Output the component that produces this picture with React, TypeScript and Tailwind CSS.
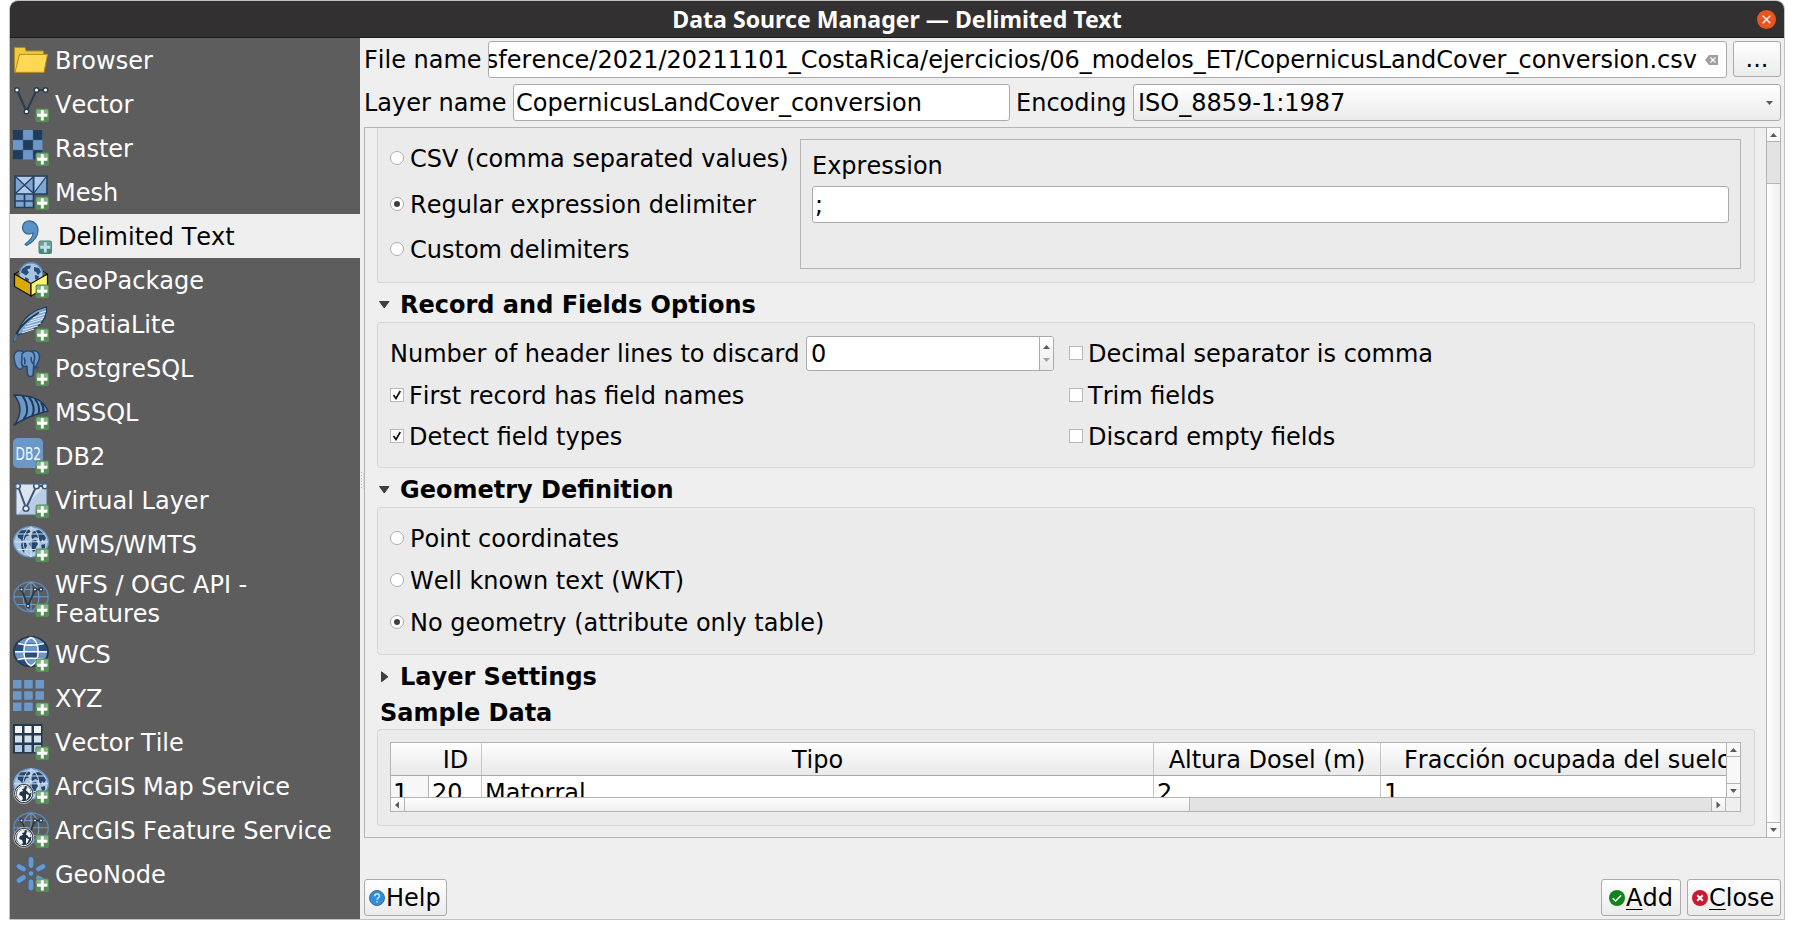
import React from "react";

const Plus = ({ tint = false }: { tint?: boolean }) => (
  <g>
    <rect x="22.5" y="22.5" width="13.5" height="13.5" rx="2" fill={tint ? "#4a8a78" : "#578c57"} />
    <rect x="23.5" y="23.5" width="11.5" height="5.5" rx="1" fill={tint ? "#6ba293" : "#86b086"} />
    <path d="M29.3 24.2v10.2M24.2 29.3h10.2" stroke={tint ? "#c3dcee" : "#ffffff"} strokeWidth="2.9" />
  </g>
);

const Globe = () => (
  <g>
    <ellipse cx="18" cy="15.8" rx="17.3" ry="15" fill="#a9c5e4" stroke="#6b97ca" strokeWidth="1.4" />
    <path d="M4.5 8.5 8 4.5l8-1 2 2-3 2 1 2-3 1-2 4-2 1-1-2-3-2zM9 16l4 1 1 3-2 3-1 4-2-3-1-5zM18 8l3-3 5-1 4 3 3 5-2 3-2-2-1 4-3-5-3-1-2 2-2-1zM18 15l5-1 2 4-2 3-1 4-2 1-2-5-2-3zM28 19l4-1v4l-3 1z" fill="#26466d" />
    <path d="M1 15.8h34M4.5 8h27M4.5 23.5h27M18 .8v30M18 .8C7.500 7 7.500 25 18 30.800M18 .8c10.500 6.200 10.500 24 0 30" fill="none" stroke="#dbe8f5" strokeWidth="0.9" />
  </g>
);

const Wire = () => (
  <g>
    <ellipse cx="18" cy="15.8" rx="17.2" ry="14.900" fill="none" stroke="#5b86bb" strokeWidth="1.5" />
    <path d="M1 15.800h34M4.500 8.500h27M4.500 23.500h27M18 1v30M18 1C7.500 7 7.500 25 18 30.800M18 1c10.500 6.200 10.500 24 0 29.800" fill="none" stroke="#6f9bcd" strokeWidth="1.100" />
    <path d="M8.500 8.500 15 25 22 8.500h6" fill="none" stroke="#26384c" strokeWidth="1.800" />
    {[[8.5, 8.5], [15, 25], [22, 8.5], [28, 8.5]].map(([x, y]) => (
      <circle key={`${x}-${y}`} cx={x} cy={y} r="1.600" fill="#e8f0f8" stroke="#26384c" strokeWidth="1.200" />
    ))}
  </g>
);

const Arc = () => (
  <g>
    <circle cx="10.700" cy="25.500" r="10" fill="#20303f" stroke="#d5d9dd" strokeWidth="0.800" />
    <circle cx="10.700" cy="25.500" r="8.200" fill="#243447" stroke="#ffffff" strokeWidth="1" />
    <path d="M5 20.500l4-2.500 3 .5-1 2-2 .5 1 2-3 1-1 3 3 1 1 3-2 2-3-3-1.500-4zM14 19l3 2 1 4-2 .5-1.500-2-1.500-1zM13 26l3 1-1 3-2 2z" fill="#f5f7f9" />
  </g>
);

const icons: Record<string, React.ReactNode> = {
  Browser: (
    <g stroke="#b58a1c" strokeWidth="1">
      <path d="M1.500 30V5.500h10.500l1 3.500h17.500V30z" fill="#f0cb42" />
      <path d="M2 30.300 6.500 12.300h28L31 30.300z" fill="#ffd956" />
    </g>
  ),
  Vector: (
    <g>
      <path d="M4 4 13.500 25.500 23.500 4h9" fill="none" stroke="#2b3d50" strokeWidth="2.100" />
      {[[4, 4], [13.5, 25.5], [23.5, 4], [32.5, 4]].map(([x, y]) => (
        <circle key={`${x}-${y}`} cx={x} cy={y} r="2.300" fill="#ffffff" stroke="#2b3d50" strokeWidth="1.400" />
      ))}
    </g>
  ),
  Raster: (
    <g>
      <path d="M0 0h29.500v29.500H0z" fill="#6c98c9" />
      <path d="M0 0h10v10H0zM20 0h9.500v10H20zM10 10h10v10H10zM0 20h10v9.500H0zM20 20h9.500v9.500H20z" fill="#213c5b" />
      <path d="M10 0v30M20 0v30M0 10h30M0 20h30" stroke="#4c6b8d" strokeWidth=".5" />
    </g>
  ),
  Mesh: (
    <g>
      <path d="M2 2h32v18H20.500v13.500H2z" fill="#7ea6d4" />
      <path d="M3 3l8 8L20 3zM3 19l8-7 9 7zM22 3h10L22 16z" fill="#b3cbe7" />
      <path d="M2 2h32v18H2zM2 20v13.500h18.500V2M2 27h18.500M11.500 20v13.500" fill="none" stroke="#24405f" strokeWidth="1.700" />
      <path d="M3 3l17 16M20 3 3 19M33 3 21 19" stroke="#24405f" strokeWidth="1.200" />
    </g>
  ),
  "Delimited Text": (
    <path d="M6.500 9.500C6.500 5 9.800 2.600 14 3c5 .5 8.300 4.500 8 10-.4 6.500-5.500 11.500-11.500 14.500l-1.300-1.300c4.300-3.200 7.600-6.700 8-11.200-3.500 1.500-7 1-9-1-1.200-1.200-1.700-3-1.700-4.500z" fill="#5a92c8" stroke="#366b9c" strokeWidth="1.300" />
  ),
  GeoPackage: (
    <g>
      <path d="M1.500 12 8 8v9zM34.500 12 28 8v9z" fill="#6b5a10" stroke="#111" strokeWidth="1" />
      <circle cx="18" cy="12.500" r="11.700" fill="#a9c5e4" stroke="#5d8cc0" strokeWidth="1.400" />
      <path d="M9 7l4-3 5-.5-1 3-3 1 2 3-3 3-3-2-2-1zM21 5l5 1 2 4-3 3-2-3-2-1zM12 15l4 2-1 4h-3zM22 13l4 1-1 4-3-1z" fill="#2b4f7b" />
      <path d="M1.500 12 18 21.500v12.500L1.500 24.500z" fill="#d9aa00" stroke="#111" strokeWidth="1.200" />
      <path d="M34.500 12 18 21.500v12.500l16.500-9.500z" fill="#fdf372" stroke="#111" strokeWidth="1.200" />
    </g>
  ),
  SpatiaLite: (
    <g>
      <path d="M4.500 29C6 19 13 6 33.500 1 34 7 32 14 26 19c-5 4-10 7-21.500 10z" fill="#7ba5d3" stroke="#24384d" strokeWidth="1.200" />
      <path d="M9 27l12-4M10 24l15-4M12 21l16-4M14 18l16-5M17 15l14-4M20 12l12-4M24 8l9-3" stroke="#dce8f4" strokeWidth="1.100" />
      <path d="M1 35.500c1-8 8-19 25-29" fill="none" stroke="#24384d" strokeWidth="1.800" />
      <path d="M1.500 35c.3-2.500 1-4.500 2-6.500" stroke="#4d79a8" strokeWidth="2.200" />
    </g>
  ),
  PostgreSQL: (
    <g fill="#6c98c9" stroke="#294a70" strokeWidth="1.500" strokeLinejoin="round">
      <path d="M10 1.500c-6-2-9.500 1-9 6.500.5 4 2 9.500 5 11 3 1 4-2 4.500-5z" />
      <path d="M18 1.500c4-1.500 8-.5 8.500 4.500 0 5-3 9.500-4.500 11.500l-4-4z" />
      <path d="M9 4c2-3 6-3.800 9.500-2.500 3.500 1.500 3.500 6 2.500 10l-1 13.500c-.8 2.300-5 2-5.500-.5l-.5-8.500c-3 1-5 0-5.500-2.500z" />
      <path d="M21 17.500c2 1 3.800.5 5-.5M11 7.500c1 2.500 1.500 5 .5 7M18.500 7c-.8 2 .2 5 1.500 7" fill="none" />
    </g>
  ),
  MSSQL: (
    <g stroke="#1f3957" strokeWidth="1.400">
      <path d="M1 1c13 .5 28 2 34 16C23 20 9 25 .8 31.500 9 22 9 10 1 1z" fill="#6c98c9" />
      <path d="M9.500 2c6 8 6 18 1 23M16 3c5 6 6 14 3 19M22 5c4 5 5 10 3.500 15M28 8.500c2 3 3 6 2.500 9.500" fill="none" strokeWidth="2" />
    </g>
  ),
  DB2: (
    <g>
      <rect x="0" y="0" width="30" height="30" rx="5" fill="#6c98c9" />
      <text x="15.300" y="21.500" textAnchor="middle" textLength="25.500" lengthAdjust="spacingAndGlyphs" fontSize="18" fill="#f2f6fa" fontFamily="DejaVu Sans, sans-serif">DB2</text>
    </g>
  ),
  "Virtual Layer": (
    <g>
      <path d="M3 2h31v31H3z" fill="#b9cce2" />
      <path d="M3 2h31L3 33z" fill="#dbe4ef" />
      <path d="M5 4 13 26 23.500 4h9" fill="none" stroke="#3c5878" strokeWidth="2" />
      {[[4.5, 4], [13, 26.5], [23.5, 4], [32, 4]].map(([x, y]) => (
        <circle key={`${x}-${y}`} cx={x} cy={y} r="2.800" fill="#eef3f8" stroke="#3c5878" strokeWidth="1.600" />
      ))}
      <path d="M3 2h31v31H3z" fill="none" stroke="#4e6f94" strokeWidth="1" />
    </g>
  ),
  "WMS/WMTS": <Globe />,
  "WFS / OGC API - Features": <Wire />,
  WCS: (
    <g>
      <ellipse cx="18" cy="15.700" rx="17.200" ry="14.900" fill="#2a4e78" stroke="#22364c" strokeWidth="1.500" />
      <path d="M2 15.700C2 19 3 21 4 22.500h28c1-1.500 2-4 2-6.800zM5 7.500C8 4 12 1.800 18 1.500s10 2.500 13 6z" fill="#6c98c9" />
      <path d="M12 8h12l1.500 7.500H10.500z" fill="#6c98c9" />
      <path d="M10.500 16h15L24 22.500H12z" fill="#2a4e78" />
      <path d="M12 22.500h12L18 30z" fill="#6c98c9" />
      <path d="M2 15.700h32M5 7.500c8 2 18 2 26 0M4.500 23.500c8-1.500 19-1.500 27 0M18 1.500C8.500 5 8.500 26 18 30M18 1.500C27.500 5 27.500 26 18 30" fill="none" stroke="#ffffff" strokeWidth="1.500" />
    </g>
  ),
  XYZ: (
    <path d="M0 0h8.500v8.500H0zM11.200 0h8.500v8.500h-8.500zM22.500 0H31v8.500h-8.500zM0 11.200h8.500v8.500H0zM11.200 11.200h8.500v8.500h-8.500zM22.500 11.200H31v8.500h-8.500zM0 22.500h8.500V31H0zM11.200 22.500h8.500V31h-8.500z" fill="#6c98c9" />
  ),
  "Vector Tile": (
    <g>
      <path d="M0 0h29.500v29.500H0z" fill="#26384c" />
      <path d="M2 2h7v7H2zM11.500 2h7v7h-7zM21 2h7v7h-7z" fill="#f2f4f6" />
      <path d="M2 11.500h7v7H2zM11.500 11.500h7v7h-7zM21 11.500h7v7h-7z" fill="#d3e0ee" />
      <path d="M2 21h7v7H2zM11.500 21h7v7h-7zM21 21h7v7h-7z" fill="#b0cbe9" />
    </g>
  ),
  "ArcGIS Map Service": (
    <g>
      <Globe />
      <Arc />
    </g>
  ),
  "ArcGIS Feature Service": (
    <g>
      <Wire />
      <Arc />
    </g>
  ),
  GeoNode: (
    <g>
      <path d="M18 3.500v6M18 26v6M6 10.500l4.500 2.500M30 10.500 25.500 13M6 24.500l4.500-3M30 24.500 25.500 22" stroke="#3c6390" strokeWidth="6.400" strokeLinecap="round" />
      <path d="M18 3.500v6M18 26v6M6 10.500l4.500 2.500M30 10.500 25.500 13M6 24.500l4.500-3M30 24.500 25.500 22" stroke="#6c98c9" strokeWidth="4.800" strokeLinecap="round" />
      <circle cx="18" cy="17.500" r="2.800" fill="#6c98c9" stroke="#3c6390" strokeWidth="1" />
    </g>
  ),
};

const sources = Object.keys(icons);

function SourceItem({ name }: { name: string }) {
  const selected = name === "Delimited Text";
  const tall = name.startsWith("WFS");
  return (
    <li
      className={`flex items-center gap-[6px] ${tall ? "h-[66px]" : "h-11"} ${
        selected ? "bg-[#efefef] pl-[6px] text-black" : "pl-[3px] text-white"
      }`}
    >
      <svg width="36" height="36" viewBox="0 0 36 36" className="shrink-0">
        {icons[name]}
        {name !== "Browser" && <Plus tint={selected} />}
      </svg>
      <span className={`w-[290px] pt-[2px] ${tall ? "leading-[29px]" : "leading-7"}`}>{name}</span>
    </li>
  );
}

type Dir = "up" | "down" | "left" | "right";
const arrows: Record<Dir, string> = {
  up: "M0 5h7L3.500 1z",
  down: "M0 1h7L3.500 5z",
  left: "M5 -.5v7L1 3z",
  right: "M1.500 -.5v7l4-3.500z",
};
const Arrow = ({ dir, color = "#5a5a5a" }: { dir: Dir; color?: string }) => (
  <svg width="8" height="6" viewBox="0 0 8 6" overflow="visible">
    <path d={arrows[dir]} fill={color} />
  </svg>
);

const Radio = ({ label, on = false }: { label: string; on?: boolean }) => (
  <label className="flex items-center gap-[6px]">
    <span className="flex size-[14px] items-center justify-center rounded-full border border-[#adadad] bg-white">
      {on && <span className="size-[6px] rounded-full bg-[#404040]" />}
    </span>
    <span className="h-7 leading-[30px]">{label}</span>
  </label>
);

const Check = ({ label, on = false }: { label: string; on?: boolean }) => (
  <label className="flex items-center gap-[5px]">
    <span className="flex size-[14px] items-center justify-center border border-[#b9b9b9] bg-white">
      {on && (
        <svg width="10" height="10" viewBox="0 0 10 10">
          <path d="M1.500 5 4 8.500 8.300 1" fill="none" stroke="#111" strokeWidth="1.700" />
        </svg>
      )}
    </span>
    <span className="h-7 leading-[30px]">{label}</span>
  </label>
);

const Heading = ({ title, open }: { title: string; open: boolean }) => (
  <h2 className="flex h-[39px] shrink-0 items-center pt-1 font-bold">
    <svg width="23" height="12" viewBox="0 0 23 12" className="shrink-0">
      <path d={open ? "M2.500 2.500h9.500l-4.750 6.500z" : "M4.500 .8v10L11 5.800z"} fill="#404040" stroke="#2a2a2a" strokeWidth="0.800" />
    </svg>
    {title}
  </h2>
);

const field = "flex items-center rounded-[3px] border border-[#ababab] bg-white";
const button = "flex items-center rounded-[3px] border border-[#ababab] bg-linear-to-b from-white to-[#ebebeb]";
const group = "rounded-[3px] border border-[#d7d7d7] bg-[#ebebeb]";
const headerCell = "flex h-full items-center justify-center border-r border-[#c6c6c6] pt-[2px]";

export default function App() {
  return (
    <div className="h-[929px] w-[1794px] overflow-hidden bg-white pl-[9px] font-['DejaVu_Sans',sans-serif] text-[24px] leading-7 text-black [font-kerning:none]">
      <div className="flex h-[920px] w-[1776px] flex-col overflow-hidden rounded-t-[9px] border border-[#c2c2c2] bg-[#efefef]">
        <header className="flex h-[37px] shrink-0 items-center border-b border-[#1d1c1d] bg-[#323031]">
          <div className="w-[36px]" />
          <h1 className="flex-1 pb-px text-center font-['Noto_Sans',sans-serif] text-[23.100px] font-bold text-white [font-kerning:normal]">
            Data Source Manager — Delimited Text
          </h1>
          <div className="flex w-[36px] pl-[9px]">
            <span className="flex size-[19px] items-center justify-center rounded-full bg-[#e95420]">
              <svg width="9" height="9" viewBox="0 0 9 9">
                <path d="M.7.7l7.600 7.600M8.300.7.700 8.300" stroke="#fff" strokeWidth="1.300" />
              </svg>
            </span>
          </div>
        </header>

        <div className="flex min-h-0 flex-1 whitespace-nowrap">
          <ul className="w-[350px] shrink-0 bg-[#5d5d5d] [&_span]:whitespace-normal">
            {sources.map((s) => (
              <SourceItem key={s} name={s} />
            ))}
          </ul>

          <div className="flex w-1 shrink-0 items-center justify-center pt-[3px]">
            <svg width="3" height="18" viewBox="0 0 3 18">
              <path d="M.5 1v16M2.500 2.500v16" stroke="#b4b4b4" strokeWidth="1" strokeDasharray="1 2" />
            </svg>
          </div>

          <main className="flex min-w-0 flex-1 flex-col pt-[3px] pr-[3px]">
            <div className="flex items-start">
              <span className="flex h-[37px] w-[124px] items-center">File name</span>
              <div className={`${field} h-[37px] w-[1239px]`}>
                <div className="flex w-[1208px] justify-end overflow-hidden">
                  <span>sference/2021/20211101_CostaRica/ejercicios/06_modelos_ET/CopernicusLandCover_conversion.csv</span>
                </div>
                <svg width="13" height="10" viewBox="0 0 13 10" className="ml-[8px]">
                  <path d="M0 5 4 0h9v10H4z" fill="#a0a0a0" />
                  <path d="M5.500 2.500l5 5M10.500 2.500l-5 5" stroke="#fff" strokeWidth="1.200" />
                </svg>
              </div>
              <div className={`${button} ml-[6px] h-[36px] w-12 justify-center`}>...</div>
            </div>

            <div className="mt-[6px] flex h-[37px] items-center">
              <span className="w-[149px]">Layer name</span>
              <div className={`${field} h-[37px] w-[497px] pl-[2px]`}>CopernicusLandCover_conversion</div>
              <span className="w-[123px] pl-[6px]">Encoding</span>
              <div className={`${button} h-[37px] w-[648px] justify-between pr-[6px] pl-[4px]`}>
                ISO_8859-1:1987
                <Arrow dir="down" />
              </div>
            </div>

            <div className="mt-[6px] flex h-[711px] shrink-0 border border-[#b5b5b5]">
              <div className="flex w-[1401px] flex-col overflow-hidden pr-[11px] pl-3">
                <section className="flex h-[155px] shrink-0 rounded-b-[3px] border border-t-0 border-[#d7d7d7] bg-[#ebebeb] pl-3">
                  <div className="grid h-[144px] w-[410px] grid-rows-[46px_46px_44px] pt-[7px]">
                    <Radio label="CSV (comma separated values)" />
                    <Radio label="Regular expression delimiter" on />
                    <Radio label="Custom delimiters" />
                  </div>
                  <div className="mt-[11px] h-[130px] w-[941px] border border-[#b4b4b4] pt-[12px] pl-[11px]">
                    <div className="h-[34px]">Expression</div>
                    <div className={`${field} h-[37px] w-[917px] pl-[2px]`}>;</div>
                  </div>
                </section>

                <Heading title="Record and Fields Options" open />
                <section className={`${group} flex h-[146px] shrink-0 pl-3`}>
                  <div className="flex w-[679px] flex-col pt-[13px]">
                    <div className="flex items-center">
                      <span className="w-[416px]">Number of header lines to discard</span>
                      <div className={`${field} h-[35px] w-[248px] justify-between pl-1`}>
                        0
                        <div className="flex h-full w-[14px] flex-col items-center justify-evenly rounded-r-[2px] border-l border-[#ababab] bg-linear-to-b from-white to-[#ebebeb]">
                          <Arrow dir="up" />
                          <Arrow dir="down" color="#a5a5a5" />
                        </div>
                      </div>
                    </div>
                    <div className="flex flex-col gap-[13px] pt-[10px]">
                      <Check label="First record has field names" on />
                      <Check label="Detect field types" on />
                    </div>
                  </div>
                  <div className="flex flex-col pt-[16px]">
                    <Check label="Decimal separator is comma" />
                    <div className="flex flex-col gap-[13px] pt-[14px]">
                      <Check label="Trim fields" />
                      <Check label="Discard empty fields" />
                    </div>
                  </div>
                </section>

                <Heading title="Geometry Definition" open />
                <section className={`${group} flex h-[148px] shrink-0 flex-col gap-[14px] pt-[16px] pl-3`}>
                  <Radio label="Point coordinates" />
                  <Radio label="Well known text (WKT)" />
                  <Radio label="No geometry (attribute only table)" on />
                </section>

                <Heading title="Layer Settings" open={false} />
                <h2 className="h-[35px] shrink-0 pt-[5px] pl-[3px] font-bold">Sample Data</h2>
                <section className={`${group} h-[97px] shrink-0 pt-3 pl-3`}>
                  <div className="flex h-[70px] w-[1351px] flex-col border border-[#b4b4b4]">
                    <div className="flex h-[54px]">
                      <div className="w-[1335px] overflow-hidden bg-white">
                        <div className="flex h-[33px] w-[1500px] items-center border-b border-[#a9a9a9] bg-linear-to-b from-white via-[#f3f3f3] to-[#eaeaea]">
                          <span className="w-[37px]" />
                          <span className={`${headerCell} w-[54px] pl-[2px]`}>ID</span>
                          <span className={`${headerCell} w-[672px]`}>Tipo</span>
                          <span className={`${headerCell} w-[227px]`}>Altura Dosel (m)</span>
                          <span className="flex h-full items-center pt-[2px] pl-[23px]">Fracción ocupada del suelo</span>
                        </div>
                        <div className="flex h-[38px] w-[1500px]">
                          <span className="w-[38px] border-r border-[#b4b4b4] bg-[#f7f7f7] pt-[3px] pl-[2px]">1</span>
                          <span className="w-[53px] border-r border-[#c6c6c6] pt-[3px] pl-[3px]">20</span>
                          <span className="w-[672px] border-r border-[#c6c6c6] pt-[3px] pl-[3px]">Matorral</span>
                          <span className="w-[227px] border-r border-[#c6c6c6] pt-[3px] pl-[3px]">2</span>
                          <span className="pt-[3px] pl-[3px]">1</span>
                        </div>
                      </div>
                      <div className="flex w-[14px] flex-1 flex-col border-l border-[#b4b4b4] bg-[#f8f8f8]">
                        <span className="flex h-[14px] items-center justify-center border-b border-[#b4b4b4]">
                          <Arrow dir="up" />
                        </span>
                        <span className="flex-1" />
                        <span className="flex h-[14px] items-center justify-center border-t border-[#b4b4b4]">
                          <Arrow dir="down" />
                        </span>
                      </div>
                    </div>
                    <div className="flex flex-1 border-t border-[#b4b4b4] bg-linear-to-b from-white to-[#efefef]">
                      <span className="flex w-[14px] items-center justify-center border-r border-[#b4b4b4]">
                        <Arrow dir="left" />
                      </span>
                      <span className="w-[785px] border-r border-[#b4b4b4]" />
                      <span className="flex-1 bg-[#e3e3e3]" />
                      <span className="flex w-[14px] items-center justify-center border-l border-[#b4b4b4]">
                        <Arrow dir="right" />
                      </span>
                      <span className="w-[15px] border-l border-[#b4b4b4] bg-[#efefef]" />
                    </div>
                  </div>
                </section>
              </div>

              <div className="flex flex-1 flex-col border-l border-[#b4b4b4] bg-linear-to-r from-white to-[#efefef]">
                <span className="flex h-[14px] items-center justify-center border-b border-[#b4b4b4] bg-[#fafafa]">
                  <Arrow dir="up" />
                </span>
                <span className="h-[42px] border-b border-[#b4b4b4] bg-[#e3e3e3]" />
                <span className="flex-1" />
                <span className="flex h-[15px] items-center justify-center border-t border-[#b4b4b4] bg-[#fafafa]">
                  <Arrow dir="down" />
                </span>
              </div>
            </div>

            <footer className="mt-[41px] flex h-[37px] shrink-0">
              <button className={`${button} w-[83px] pl-1`}>
                <svg width="16" height="16" viewBox="0 0 16 16" className="mr-px shrink-0">
                  <circle cx="8" cy="8" r="7.500" fill="#2f8ed6" stroke="#3a6f98" />
                  <path d="M5.700 6.200c0-3 4.700-3 4.700-.3C10.400 8 8 7.800 8 9.700M8 11v1.500" fill="none" stroke="#e4f2fc" strokeWidth="1.300" />
                </svg>
                Help
              </button>
              <button className={`${button} ml-auto w-[80px] pl-[7px]`}>
                <svg width="16" height="16" viewBox="0 0 16 16" className="mr-px shrink-0">
                  <circle cx="8" cy="8" r="8" fill="#12841f" />
                  <path d="M3.700 8.200l2.900 2.800 5.500-5.800" fill="none" stroke="#fff" strokeWidth="1.400" />
                </svg>
                <span className="underline decoration-1 underline-offset-[3px]">A</span>dd
              </button>
              <button className={`${button} ml-[6px] w-[94px] pl-1`}>
                <svg width="16" height="16" viewBox="0 0 16 16" className="mr-px shrink-0">
                  <circle cx="8" cy="8" r="8" fill="#c81a32" />
                  <path d="M5.200 5.200l5.600 5.600M10.800 5.200l-5.600 5.600" stroke="#fff" strokeWidth="2" />
                </svg>
                <span className="underline decoration-1 underline-offset-[3px]">C</span>lose
              </button>
            </footer>
          </main>
        </div>
      </div>
    </div>
  );
}
